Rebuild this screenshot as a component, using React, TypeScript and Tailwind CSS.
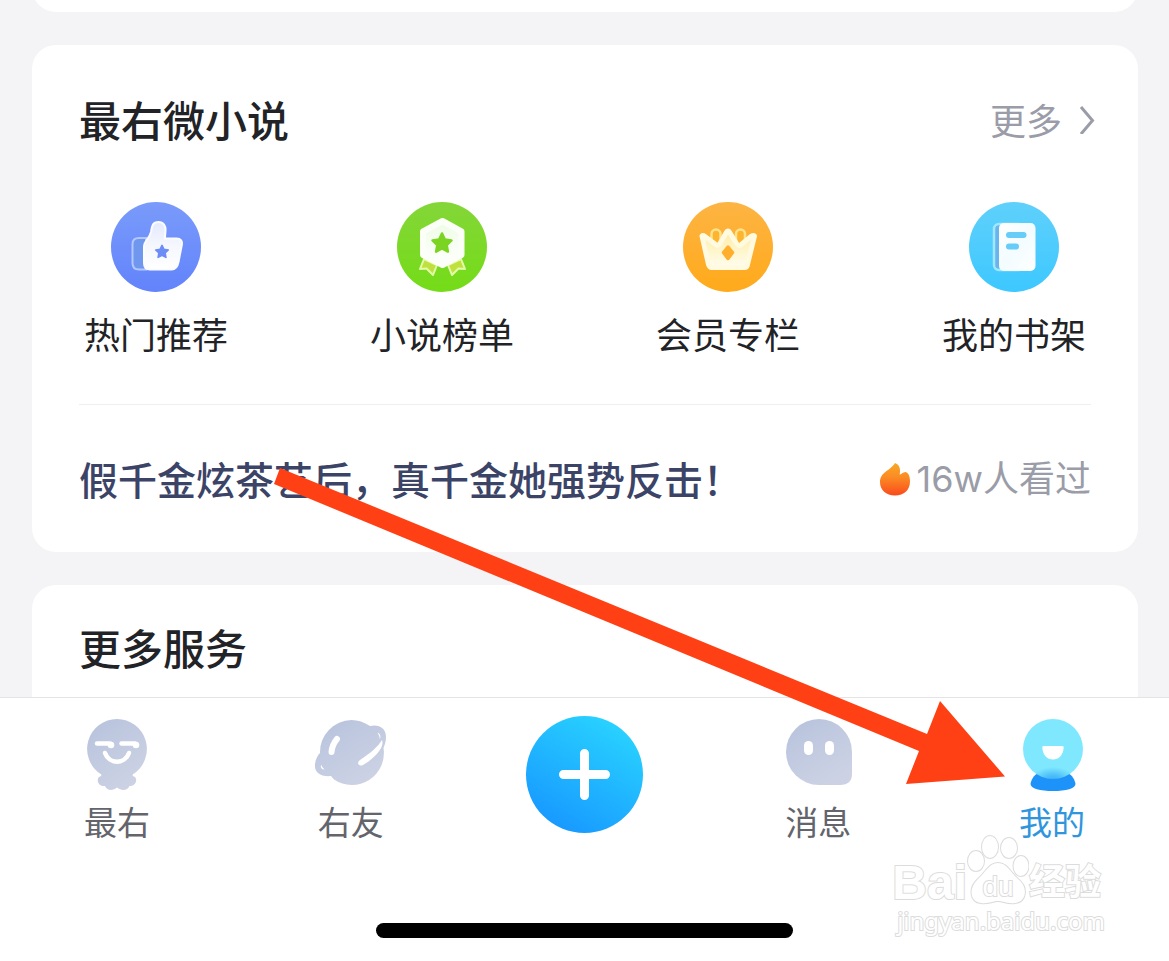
import type { ReactNode } from "react";

const STAR =
  "M0 -10 L2.9 -4 L9.5 -3.1 L4.7 1.5 L5.9 8.1 L0 5 L-5.9 8.1 L-4.7 1.5 L-9.5 -3.1 L-2.9 -4 Z";

function Disc({ id, from, to, children }: { id: string; from: string; to: string; children: ReactNode }) {
  return (
    <svg viewBox="0 0 90 90" className="size-[90px]" aria-hidden="true">
      <defs>
        <linearGradient id={id} x1="0" y1="0" x2="0" y2="1">
          <stop offset="0" stopColor={from} />
          <stop offset="1" stopColor={to} />
        </linearGradient>
      </defs>
      <circle cx="45" cy="45" r="45" fill={`url(#${id})`} />
      {children}
    </svg>
  );
}

function ThumbIcon() {
  return (
    <Disc id="disc-blue" from="#7a9bfa" to="#6283fb">
      <defs>
        <linearGradient id="thumb" x1="0" y1="0" x2="0" y2="1">
          <stop offset="0" stopColor="#e3eafd" />
          <stop offset="0.5" stopColor="#f5f7fe" />
          <stop offset="1" stopColor="#fff" />
        </linearGradient>
      </defs>
      <path d="M35 36 H28 C23.500 36 21.500 38.500 21.500 42 V61 C21.500 65 23.500 67.500 28 67.500 H35 Z" fill="#6f97ee" stroke="#b4c7fd" strokeWidth="2" />
      <path
        d="M33 44 C33 39 38.500 37 40 30 C41 24 41.500 20 47.500 20 C52.500 20 55 24 54.500 29 C54.300 32 54 34 54 36.500 H65.500 C70 36.500 71.500 39 70.800 43 L67.500 60 C66.500 65 64.500 67.500 60.500 67.500 H39 C35 67.500 33 65 33 61 Z"
        fill="url(#thumb)"
        stroke="#fbfcff"
        strokeWidth="2"
      />
      <path d={STAR} transform="translate(51 50) scale(0.66)" fill="#6d8df6" stroke="#6d8df6" strokeWidth="2.500" strokeLinejoin="round" />
    </Disc>
  );
}

function MedalIcon() {
  return (
    <Disc id="disc-green" from="#84d638" to="#74dc17">
      <defs>
        <linearGradient id="medal" x1="0" y1="0" x2="0" y2="1">
          <stop offset="0" stopColor="#eefce5" />
          <stop offset="1" stopColor="#fff" />
        </linearGradient>
      </defs>
      <g fill="#c0e13d" stroke="#e3fbab" strokeWidth="2" strokeLinejoin="round">
        <path d="M27 57 L23 67 L29.500 66.500 L36 73 L40 63 Z" />
        <path d="M64 57 L68 67 L61.500 66.500 L55 73 L51 63 Z" />
      </g>
      <path d="M45.500 19 L64.500 29.500 V53 L45.500 63 L26 53 V29.500 Z" fill="url(#medal)" stroke="#fbfff8" strokeWidth="6" strokeLinejoin="round" />
      <path d={STAR} transform="translate(45 41.500)" fill="#7bd422" stroke="#7bd422" strokeWidth="2.500" strokeLinejoin="round" />
    </Disc>
  );
}

function CrownIcon() {
  return (
    <Disc id="disc-orange" from="#fdb443" to="#ffaa1b">
      <defs>
        <linearGradient id="crown" x1="0" y1="0" x2="0" y2="1">
          <stop offset="0" stopColor="#ffeba6" />
          <stop offset="0.500" stopColor="#fff5c8" />
          <stop offset="1" stopColor="#fffdf0" />
        </linearGradient>
      </defs>
      <g fill="#fdb52f" stroke="#ffe28a" strokeWidth="2.500">
        <rect x="28.500" y="27.500" width="9" height="18" rx="4.500" />
        <rect x="53" y="27.500" width="9" height="18" rx="4.500" />
      </g>
      <path
        d="M19 34 Q20 33 22 34.500 L34 43.500 Q35.500 44 37 41.500 L43 31 Q45 27 47 31 L53.500 41.500 Q55 44 57 43.500 L68 34.500 Q70.500 33 71.500 34 L64.500 62.500 Q64 65.500 61.500 65.500 H28.500 Q26.500 65.500 25.500 62.500 Z"
        fill="url(#crown)"
        stroke="#fffae0"
        strokeWidth="5"
        strokeLinejoin="round"
      />
      <path d="M45 45 L49.500 50.500 L45 56.500 L40.500 50.500 Z" fill="#ffae2d" stroke="#ffae2d" strokeWidth="3.500" strokeLinejoin="round" />
    </Disc>
  );
}

function BookIcon() {
  return (
    <Disc id="disc-sky" from="#5fd0fb" to="#3dc8ff">
      <defs>
        <linearGradient id="page" x1="0" y1="0" x2="1" y2="1">
          <stop offset="0" stopColor="#fff" />
          <stop offset="0.500" stopColor="#f3fcff" />
          <stop offset="1" stopColor="#fff" />
        </linearGradient>
      </defs>
      <rect x="25" y="22" width="30" height="46" rx="5" fill="#67b4ef" stroke="#a0e8ff" strokeWidth="2.500" />
      <rect x="30" y="21" width="36.500" height="48" rx="5" fill="url(#page)" />
      <rect x="37" y="30" width="20.500" height="6" rx="3" fill="#65cdf7" />
      <rect x="37" y="41.500" width="13" height="6" rx="3" fill="#65cdf7" />
    </Disc>
  );
}

function GreyGradient({ id }: { id: string }) {
  return (
    <defs>
      <linearGradient id={id} x1="0" y1="0" x2="0.600" y2="1">
        <stop offset="0" stopColor="#b6c2dc" />
        <stop offset="1" stopColor="#ccd2e4" />
      </linearGradient>
    </defs>
  );
}

function OctopusIcon() {
  return (
    <svg viewBox="0 0 80 80" className="size-20" aria-hidden="true">
      <GreyGradient id="grey-octopus" />
      <path
        d="M40 3 A30 30 0 0 1 56 58.300 C55 59.500 56 60 58 61 C61 64 58 71 52.500 70 C50.500 75 44 75 40 71.500 C36 75 30 75 28 70 C21.500 71 19 64 22 61 C24 60 25 59.500 24 58.300 A30 30 0 0 1 40 3 Z"
        fill="url(#grey-octopus)"
      />
      <g fill="none" stroke="#fff" strokeLinecap="round">
        <path d="M20 27.500 H33" strokeWidth="4.500" />
        <path d="M44.500 27.500 H58" strokeWidth="4.500" />
        <path d="M28 37 C32 48.500 48 48.500 52 37" strokeWidth="4.500" />
      </g>
      <circle cx="34" cy="29" r="3.300" fill="#fff" />
      <circle cx="59" cy="29" r="3.300" fill="#fff" />
    </svg>
  );
}

function PlanetIcon() {
  return (
    <svg viewBox="0 0 80 80" className="size-20" aria-hidden="true">
      <GreyGradient id="grey-planet" />
      <path
        d="M40.500 4 C47 4 53 6 59 10 C68 8 75 12 75 21 C75 26 73.500 29 72.500 32 A32 32 0 0 1 23 63.500 L20 60 C9 61 3 56 4 48 C4.500 43 7 39 9 37 A32 32 0 0 1 40.500 4 Z"
        fill="url(#grey-planet)"
      />
      <path d="M26 23 Q21 29 20.500 36" fill="none" stroke="#fff" strokeWidth="6" strokeLinecap="round" />
      <path d="M71 24 C74 31 64 42 52 49 C48 51 45 47 49 44 C58 38 67 31 71 24 Z" fill="#fff" />
      <path d="M66.500 16.500 Q70.500 18 69 23.500 Q68.500 19.500 66.500 16.500 Z" fill="#fff" />
      <path d="M10 48.500 Q9 53.500 13.500 53.500 Q11 51.500 10 48.500 Z" fill="#fff" />
    </svg>
  );
}

function MessageIcon() {
  return (
    <svg viewBox="0 0 80 80" className="size-20" aria-hidden="true">
      <GreyGradient id="grey-message" />
      <path d="M41 3 A33 33 0 0 1 74 36 V58 C74 65 70 69 62 69 H41 A33 33 0 0 1 41 3 Z" fill="url(#grey-message)" />
      <rect x="26" y="25" width="9" height="14" rx="4.500" fill="#fff" />
      <rect x="47" y="25" width="9" height="14" rx="4.500" fill="#fff" />
    </svg>
  );
}

function ProfileIcon() {
  return (
    <svg viewBox="0 0 80 80" className="size-20" aria-hidden="true">
      <defs>
        <radialGradient id="halo" gradientUnits="userSpaceOnUse" cx="0" cy="0" r="1" gradientTransform="translate(41 64) scale(22 13)">
          <stop offset="0" stopColor="#38aff8" />
          <stop offset="0.400" stopColor="#4fc0f9" />
          <stop offset="1" stopColor="#7fe8ff" />
        </radialGradient>
      </defs>
      <path d="M26 57 H56 C60 59 63 64 63.500 68 C63.500 72.500 54 75 41 75 C28 75 18.500 72.500 18.500 68 C19 64 22 59 26 57 Z" fill="#1d93fa" />
      <circle cx="41" cy="33" r="30" fill="url(#halo)" />
      <path d="M31.500 30 H50.500 Q52 30 51.700 32 C51 39 47 43.500 41 43.500 C35 43.500 31 39 30.300 32 Q30 30 31.500 30 Z" fill="#fff" />
    </svg>
  );
}

function PlusIcon() {
  return (
    <svg viewBox="0 0 117 117" className="size-[117px]" aria-hidden="true">
      <defs>
        <linearGradient id="plus" x1="0.800" y1="0.050" x2="0.250" y2="1">
          <stop offset="0" stopColor="#29d3ff" />
          <stop offset="1" stopColor="#1797ff" />
        </linearGradient>
      </defs>
      <circle cx="58.500" cy="58.500" r="58.500" fill="url(#plus)" />
      <path d="M37.500 58.500 H79.500 M58.500 37.500 V79.500" stroke="#fff" strokeWidth="9" strokeLinecap="round" />
    </svg>
  );
}

function FlameIcon() {
  return (
    <svg viewBox="0 0 32 34" className="h-[34px] w-8" aria-hidden="true">
      <defs>
        <linearGradient id="flame" x1="0" y1="0" x2="0" y2="1">
          <stop offset="0" stopColor="#f9a824" />
          <stop offset="0.450" stopColor="#fb8a24" />
          <stop offset="1" stopColor="#fa4a1c" />
        </linearGradient>
      </defs>
      <path
        d="M16 1 C20 2.500 22 6 20.700 12.500 C22.500 12.500 23.500 10.300 26.500 10 C30 11 31 15 31 19.500 C31 28 25 33.500 16 33.500 C7 33.500 1 28 1 20 C1 10 11 9 16 1 Z"
        fill="url(#flame)"
      />
    </svg>
  );
}

const shortcuts = [
  { label: "热门推荐", icon: <ThumbIcon /> },
  { label: "小说榜单", icon: <MedalIcon /> },
  { label: "会员专栏", icon: <CrownIcon /> },
  { label: "我的书架", icon: <BookIcon /> },
];

function Tab({ label, icon, active }: { label: string; icon: ReactNode; active?: boolean }) {
  return (
    <button
      type="button"
      aria-current={active ? "page" : undefined}
      className={
        active
          ? "flex flex-col items-center text-[33px] leading-[50px] text-[#2f95dc]"
          : "flex flex-col items-center text-[33px] leading-[50px] text-[#63646c]"
      }
    >
      {icon}
      {label}
    </button>
  );
}

function Arrow() {
  return (
    <svg viewBox="0 0 1169 961" className="pointer-events-none absolute top-0 left-0 w-full" aria-hidden="true">
      <path d="M280 468 L927 734 L940 701 L1005 776.500 L906 784 L919 751 L274 484 Z" fill="#ff4015" />
    </svg>
  );
}

function Watermark() {
  return (
    <div className="pointer-events-none absolute right-16 bottom-6 flex flex-col items-end font-['Liberation_Sans','Noto_Sans_CJK_SC',sans-serif] text-white [paint-order:stroke_fill] [-webkit-text-stroke:2px_#dcdcdc]">
      <div className="flex items-end pr-1">
        <span className="text-5xl leading-[44px] font-bold">Bai</span>
        <span className="relative h-[72px] w-[62px]">
          <svg viewBox="0 0 62 72" className="h-[72px] w-[62px]" aria-hidden="true">
            <g fill="#fff" stroke="#dcdcdc" strokeWidth="2">
              <ellipse cx="9" cy="28" rx="8" ry="10" />
              <ellipse cx="23" cy="14" rx="8" ry="11" />
              <ellipse cx="42" cy="15" rx="8" ry="10" />
              <ellipse cx="54" cy="33" rx="7.500" ry="10" />
              <path d="M31 30 C40 30 43 39 51 46 C62 55 59 69 48 70 C40 71 36 68 31 68 C26 68 22 71 14 70 C3 69 1 55 11 46 C19 39 22 30 31 30 Z" />
            </g>
          </svg>
          <span className="absolute inset-x-0 bottom-1 text-center text-[28px] leading-7">du</span>
        </span>
        <span className="text-4xl leading-[44px] font-bold">经验</span>
      </div>
      <span className="font-['Noto_Sans',sans-serif] text-2xl leading-8">jingyan.baidu.com</span>
    </div>
  );
}

export default function App() {
  return (
    <div className="relative flex min-h-screen flex-col bg-[#f4f4f6] font-['Noto_Sans_CJK_SC',sans-serif] text-[#222326]">
      <main className="flex flex-col gap-[33px] overflow-hidden pr-[31px] pl-8">
        <div className="-mt-12 h-[60px] rounded-b-3xl bg-white" />

        <section className="rounded-3xl bg-white px-[47px] pt-[46px]">
          <header className="flex items-center justify-between">
            <h2 className="text-[42px] leading-[56px] font-medium">最右微小说</h2>
            <a href="#novels" className="-mr-1 flex items-center gap-[17px] text-4xl leading-[56px] text-[#9a9ca8]">
              更多
              <svg viewBox="0 0 16 30" className="h-[30px] w-4" aria-hidden="true">
                <path d="M2 3 L13.500 16.500 L2 30" fill="none" stroke="#9a9ca8" strokeWidth="3" />
              </svg>
            </a>
          </header>

          <div className="mt-[55px] flex justify-between px-[5px]">
            {shortcuts.map((s) => (
              <button key={s.label} type="button" className="flex flex-col items-center gap-[15px] text-4xl leading-[52px]">
                {s.icon}
                {s.label}
              </button>
            ))}
          </div>

          <a href="#story" className="mt-[45px] flex h-[148px] items-center justify-between border-t border-[#efeff1]">
            <span className="text-[39px] font-medium text-[#3b4367]">假千金炫茶艺后，真千金她强势反击！</span>
            <span className="flex items-center gap-1.5 font-['Inter','Noto_Sans_CJK_SC',sans-serif] text-4xl text-[#9a9ca8]">
              <FlameIcon />
              <span>16w人看过</span>
            </span>
          </a>
        </section>

        <section className="h-28 rounded-t-3xl bg-white px-[47px] pt-[34px]">
          <h2 className="text-[42px] leading-[56px] font-medium">更多服务</h2>
        </section>
      </main>

      <nav className="flex grow flex-col items-center justify-between border-t border-[#e4e4e7] bg-white pt-[18px] pb-[23px]">
        <div className="grid w-full grid-cols-5">
          <Tab label="最右" icon={<OctopusIcon />} />
          <Tab label="右友" icon={<PlanetIcon />} />
          <button type="button" aria-label="发布" className="flex justify-center">
            <PlusIcon />
          </button>
          <Tab label="消息" icon={<MessageIcon />} />
          <Tab label="我的" icon={<ProfileIcon />} active />
        </div>
        <div className="h-[15px] w-[417px] rounded-full bg-black" />
      </nav>

      <Watermark />
      <Arrow />
    </div>
  );
}
